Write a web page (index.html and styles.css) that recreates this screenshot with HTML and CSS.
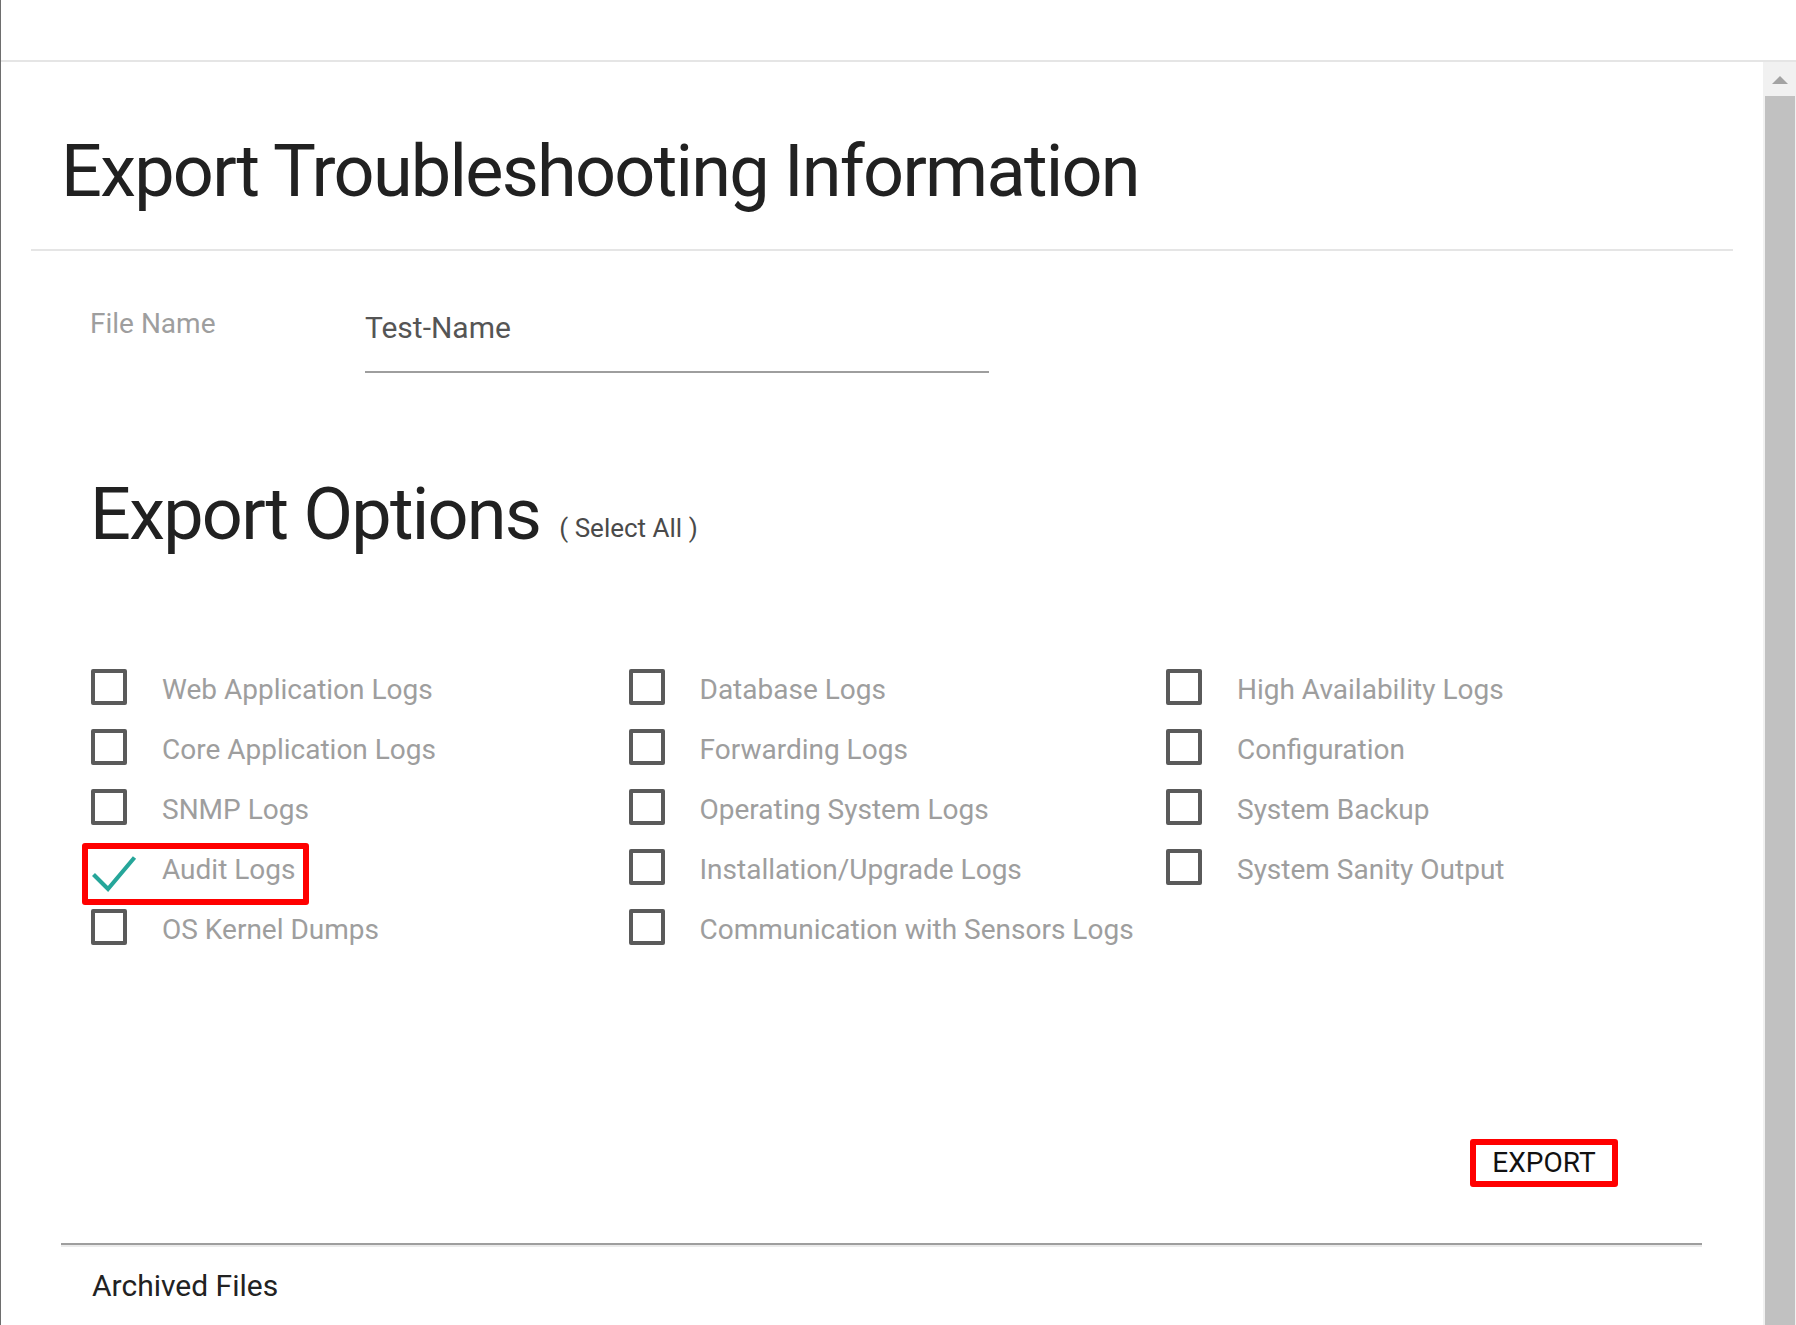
FILE: index.html
```html
<!DOCTYPE html>
<html lang="en">
<head>
<meta charset="utf-8">
<title>Export Troubleshooting Information</title>
<link rel="stylesheet" href="styles.css">
</head>
<body>
<div class="frame">
  <div class="topbar"></div>
  <div class="main">
    <div class="content">
      <header class="page-header">
        <h1 class="page-title">Export Troubleshooting Information</h1>
      </header>
      <section class="export-body">
        <div class="field-row">
          <label class="field-label" for="fname">File Name</label>
          <input class="field-input" id="fname" type="text" value="Test-Name">
        </div>
        <h2 class="options-title">Export Options <a class="select-all">( Select All )</a></h2>
        <div class="options-grid">
          <div class="option"><span class="box"></span><span class="option-label">Web Application Logs</span></div>
          <div class="option"><span class="box"></span><span class="option-label">Core Application Logs</span></div>
          <div class="option"><span class="box"></span><span class="option-label">SNMP Logs</span></div>
          <div class="option">
            <span class="box box-checked"><svg class="check" width="50" height="50" viewBox="0 0 50 50"><polyline points="2.5,25.5 17,40 43.5,8.5" fill="none" stroke="#26a69a" stroke-width="4.2" stroke-linejoin="miter" stroke-linecap="butt"/></svg></span>
            <span class="option-label">Audit Logs</span>
            <span class="highlight"></span>
          </div>
          <div class="option"><span class="box"></span><span class="option-label">OS Kernel Dumps</span></div>
          <div class="option"><span class="box"></span><span class="option-label">Database Logs</span></div>
          <div class="option"><span class="box"></span><span class="option-label">Forwarding Logs</span></div>
          <div class="option"><span class="box"></span><span class="option-label">Operating System Logs</span></div>
          <div class="option"><span class="box"></span><span class="option-label">Installation/Upgrade Logs</span></div>
          <div class="option"><span class="box"></span><span class="option-label">Communication with Sensors Logs</span></div>
          <div class="option"><span class="box"></span><span class="option-label">High Availability Logs</span></div>
          <div class="option"><span class="box"></span><span class="option-label">Configuration</span></div>
          <div class="option"><span class="box"></span><span class="option-label">System Backup</span></div>
          <div class="option"><span class="box"></span><span class="option-label">System Sanity Output</span></div>
        </div>
        <div class="actions">
          <button class="export-btn" type="button">EXPORT</button>
        </div>
        <div class="archived">
          <h3 class="archived-title">Archived Files</h3>
        </div>
      </section>
    </div>
    <div class="scrollbar">
      <div class="scroll-up"><span class="scroll-arrow"></span></div>
      <div class="scroll-thumb"></div>
    </div>
  </div>
</div>
</body>
</html>
```
FILE: styles.css
```css
* { box-sizing: border-box; }

html, body {
  margin: 0;
  padding: 0;
  background: #ffffff;
  font-family: Roboto, "Liberation Sans", Arial, sans-serif;
}

.frame {
  height: 100vh;
  border-left: 1px solid #6e6e6e;
  display: flex;
  flex-direction: column;
  overflow: hidden;
}

.topbar {
  height: 62px;
  flex: none;
  border-bottom: 2px solid #e5e5e5;
}

.main {
  flex: 1;
  display: flex;
  min-height: 0;
}

.content {
  flex: 1;
  overflow: hidden;
}

.page-header {
  margin: 0 30px;
  padding: 68px 28px 35px 30px;
  border-bottom: 2px solid #e5e5e5;
}

.page-title {
  margin: 0;
  font-size: 72px;
  line-height: 84px;
  font-weight: 400;
  letter-spacing: -1.75px;
  color: #212121;
}

.export-body {
  margin: 0 61px 0 60px;
}

.field-row {
  display: flex;
  align-items: flex-start;
  margin-top: 53px;
  padding-left: 29px;
}

.field-label {
  width: 275px;
  flex: none;
  font-size: 28px;
  line-height: 40px;
  color: #9e9e9e;
}

.field-input {
  margin-top: 1px;
  width: 624px;
  height: 68px;
  padding: 0 0 22px 0;
  border: none;
  border-bottom: 2px solid #9e9e9e;
  border-radius: 0;
  outline: none;
  background: transparent;
  font-family: Roboto, "Liberation Sans", Arial, sans-serif;
  font-size: 30px;
  line-height: 44px;
  color: #555555;
}

.options-title {
  margin: 100px 0 0;
  padding-left: 29px;
  font-size: 72px;
  line-height: 84px;
  font-weight: 400;
  letter-spacing: -1.75px;
  color: #212121;
}

.select-all {
  margin-left: 3px;
  font-size: 26px;
  line-height: 30px;
  letter-spacing: normal;
  color: #4a4a4a;
  vertical-align: 2px;
  cursor: pointer;
}

.options-grid {
  margin-top: 103px;
  padding-left: 30px;
  display: grid;
  grid-template-columns: repeat(3, 537.5px);
  grid-template-rows: repeat(5, 60px);
  grid-auto-flow: column;
}

.option {
  position: relative;
  display: flex;
  align-items: flex-start;
}

.box {
  flex: none;
  width: 36px;
  height: 36px;
  margin-top: 9px;
  border: 4px solid #5a5a5a;
  border-radius: 2px;
}

.box-checked {
  border: none;
  position: relative;
}

.check {
  display: block;
  overflow: visible;
}

.option-label {
  margin-left: 35px;
  font-size: 28px;
  line-height: 60px;
  color: #9e9e9e;
  white-space: nowrap;
}

.highlight {
  position: absolute;
  left: -9px;
  top: 3px;
  width: 227px;
  height: 62px;
  border: 6px solid #ff0000;
  border-radius: 3px;
  pointer-events: none;
}

.actions {
  display: flex;
  justify-content: flex-end;
  padding-right: 84px;
  margin-top: 179px;
}

.export-btn {
  width: 148px;
  height: 48px;
  padding: 0;
  border: 6px solid #ff0000;
  border-radius: 3px;
  background: #ffffff;
  font-family: Roboto, "Liberation Sans", Arial, sans-serif;
  font-size: 28px;
  line-height: 36px;
  font-weight: 400;
  color: #111111;
  text-align: center;
}

.archived {
  margin-top: 56px;
  border-top: 2px solid #9e9e9e;
  box-shadow: inset 0 2px 0 #ebebeb;
  padding: 21px 0 0 31px;
}

.archived-title {
  margin: 0;
  font-size: 30px;
  line-height: 40px;
  font-weight: 400;
  color: #222222;
}

.scrollbar {
  width: 33px;
  flex: none;
  background: #f1f1f1;
  display: flex;
  flex-direction: column;
}

.scroll-up {
  height: 34px;
  flex: none;
  display: flex;
  justify-content: center;
  padding-top: 14px;
  padding-left: 1px;
}

.scroll-arrow {
  width: 0;
  height: 0;
  border-left: 8px solid transparent;
  border-right: 8px solid transparent;
  border-bottom: 8px solid #a3a3a3;
}

.scroll-thumb {
  flex: 1;
  margin: 0 1px 0 2px;
  background: #c1c1c1;
}
```
